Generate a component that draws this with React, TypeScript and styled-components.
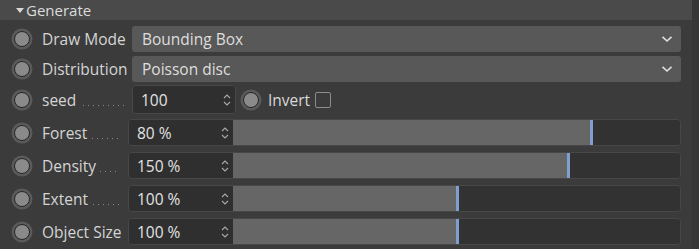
import styled, { createGlobalStyle } from 'styled-components';

const GlobalStyle = createGlobalStyle`
  html, body {
    margin: 0;
    padding: 0;
    background: #3b3b3b;
  }
  body {
    font-family: "Open Sans", "Noto Sans", sans-serif;
    font-size: 15.5px;
    color: #d6d6d6;
  }
`;

const Frame = styled.div`
  display: flex;
  width: 699px;
  height: 249px;
  overflow: hidden;
`;

const Panel = styled.div`
  flex: 1;
  display: flex;
  flex-direction: column;
  background: #3b3b3b;
`;

const ScrollStrip = styled.div`
  width: 7px;
  background: #373737;
`;

const Header = styled.div`
  height: 22px;
  display: flex;
  align-items: center;
  gap: 2px;
  padding-left: 16px;
  background: #4a4a4a;
  color: #dcdcdc;
  font-size: 15px;
`;

const Caret = styled.span`
  width: 0;
  height: 0;
  border-left: 4px solid transparent;
  border-right: 4px solid transparent;
  border-top: 5px solid #d8d8d8;
  margin-top: 1px;
`;

const Body = styled.div`
  display: flex;
  flex-direction: column;
  padding: 6px 11px 0 12px;
`;

const Row = styled.div<{ $h: number; $gap: number }>`
  display: flex;
  align-items: center;
  height: ${p => p.$h}px;
  margin-bottom: ${p => p.$gap}px;
`;

const Radio = styled.span`
  flex: none;
  width: 14px;
  height: 14px;
  border-radius: 50%;
  background: #8a8a8a;
  border: 1.5px solid #262626;
  box-shadow: 0 0 0 2.5px #5a5a5a;
  margin: 0 12px 0 2px;
`;

const Label = styled.div<{ $w: number }>`
  flex: none;
  width: ${p => p.$w}px;
  display: flex;
  align-items: baseline;
  white-space: nowrap;
  color: #d4d4d4;
`;

const Leader = styled.span<{ $from: number; $to: number }>`
  height: 1px;
  margin-left: ${p => p.$from}px;
  width: ${p => p.$to}px;
  background-image: linear-gradient(to right, #8a8a8a 1px, transparent 1px);
  background-size: 5px 1px;
  background-repeat: repeat-x;
`;

const Select = styled.div`
  flex: 1;
  height: 26px;
  display: flex;
  align-items: center;
  justify-content: space-between;
  padding: 0 8px 0 10px;
  background: #585858;
  border-radius: 3px;
  color: #dedede;
`;

const Field = styled.div<{ $w: number }>`
  flex: none;
  width: ${p => p.$w}px;
  height: 100%;
  box-sizing: border-box;
  display: flex;
  align-items: center;
  justify-content: space-between;
  padding: 0 4px 0 8px;
  background: #2f2f2f;
  color: #e2e2e2;
`;

const SeedBox = styled.div`
  display: flex;
  height: 100%;
  border: 1px solid #474747;
  border-radius: 4px;
  overflow: hidden;
`;

const SliderBox = styled.div`
  flex: 1;
  display: flex;
  height: 100%;
  box-sizing: border-box;
  border: 1px solid #474747;
  border-radius: 4px;
  overflow: hidden;
`;

const Track = styled.div`
  position: relative;
  flex: 1;
  background: #323232;
`;

const Fill = styled.div`
  position: absolute;
  left: 0;
  top: 0;
  bottom: 0;
  background: #666666;
`;

const Marker = styled.div`
  position: absolute;
  top: 0;
  bottom: 0;
  width: 3px;
  margin-left: -1px;
  background: #7f9fd1;
`;

const Tick = styled.div`
  position: absolute;
  bottom: 0;
  height: 6px;
  width: 1px;
  background: #5b6470;
`;

const Inline = styled.div`
  display: flex;
  align-items: center;
  margin-left: 5px;
  color: #d8d8d8;
`;

const Check = styled.span`
  width: 14px;
  height: 14px;
  border: 1.5px solid #8c8c8c;
  border-radius: 2px;
  margin-left: 5px;
`;

const Chevron = () => (
  <svg width="12" height="8" viewBox="0 0 12 8">
    <path d="M1.5 1.8 L6 6 L10.5 1.8" fill="none" stroke="#e0e0e0" strokeWidth="1.6" />
  </svg>
);

const Spinner = () => (
  <svg width="8" height="14" viewBox="0 0 8 14">
    <path d="M1 5 L4 2 L7 5 M1 9 L4 12 L7 9" fill="none" stroke="#a8a8a8" strokeWidth="1.1" />
  </svg>
);

type Slide = { name: string; value: string; pos: number; leader?: [number, number]; tick?: boolean };

const sliders: Slide[] = [
  { name: 'Forest', value: '80 %', pos: 0.8, leader: [5, 28] },
  { name: 'Density', value: '150 %', pos: 0.75, leader: [4, 16], tick: true },
  { name: 'Extent', value: '100 %', pos: 0.5, leader: [5, 28] },
  { name: 'Object Size', value: '100 %', pos: 0.5 },
];

export default function App() {
  return (
    <>
      <GlobalStyle />
      <Frame>
        <Panel>
          <Header>
            <Caret />
            Generate
          </Header>
          <Body>
            <Row $h={26} $gap={4}>
              <Radio />
              <Label $w={90}>Draw Mode</Label>
              <Select>
                Bounding Box
                <Chevron />
              </Select>
            </Row>
            <Row $h={26} $gap={4}>
              <Radio />
              <Label $w={90}>Distribution</Label>
              <Select>
                Poisson disc
                <Chevron />
              </Select>
            </Row>
            <Row $h={27} $gap={6}>
              <Radio />
              <Label $w={90}>
                seed
                <Leader $from={7} $to={44} />
              </Label>
              <SeedBox>
                <Field $w={102}>
                  100
                  <Spinner />
                </Field>
              </SeedBox>
              <Inline>
                <Radio />
                <span style={{ marginLeft: -3 }}>Invert</span>
                <Check />
              </Inline>
            </Row>
            {sliders.map(s => (
              <Row key={s.name} $h={27} $gap={6}>
                <Radio />
                <Label $w={86}>
                  {s.name}
                  {s.leader && <Leader $from={s.leader[0]} $to={s.leader[1]} />}
                </Label>
                <SliderBox>
                  <Field $w={104}>
                    {s.value}
                    <Spinner />
                  </Field>
                  <Track>
                    <Fill style={{ width: `${s.pos * 100}%` }} />
                    {s.tick && <Tick style={{ left: '50%' }} />}
                    <Marker style={{ left: `${s.pos * 100}%` }} />
                  </Track>
                </SliderBox>
              </Row>
            ))}
          </Body>
        </Panel>
        <ScrollStrip />
      </Frame>
    </>
  );
}
